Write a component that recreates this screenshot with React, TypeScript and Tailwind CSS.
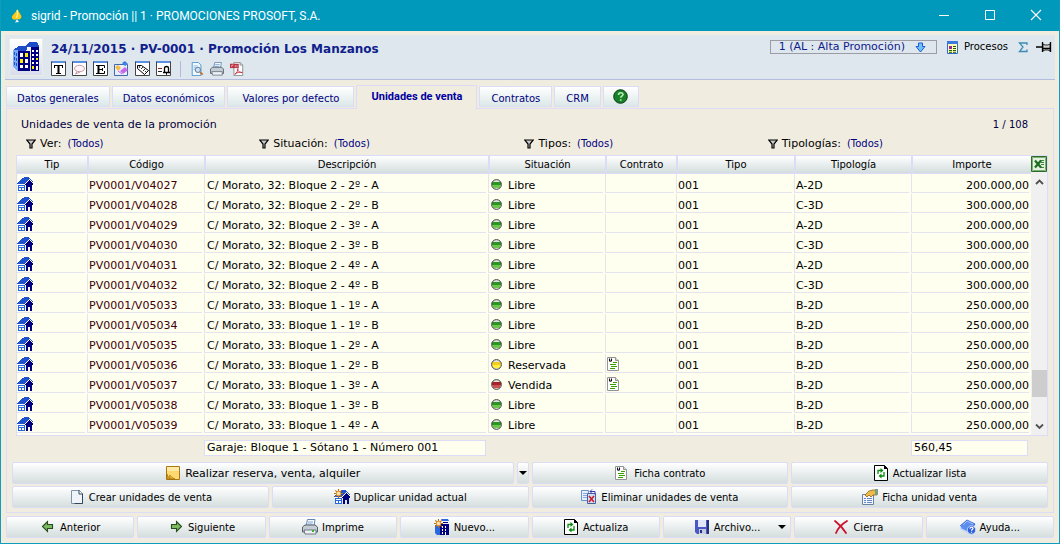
import { useState } from "react";
import type { ReactNode } from "react";

type Status = "Libre" | "Reservada" | "Vendida";

interface Unit {
  code: string;
  description: string;
  status: Status;
  type: string;
  typology: string;
  amount: string;
}

const unit = (code: string, description: string, typology: string, amount: string, status: Status = "Libre"): Unit => ({
  code: `PV0001/${code}`,
  description: `C/ Morato, ${description}`,
  status,
  type: "001",
  typology,
  amount,
});

const units: Unit[] = [
  unit("V04027", "32: Bloque 2 - 2º - A", "A-2D", "200.000,00"),
  unit("V04028", "32: Bloque 2 - 2º - B", "C-3D", "300.000,00"),
  unit("V04029", "32: Bloque 2 - 3º - A", "A-2D", "200.000,00"),
  unit("V04030", "32: Bloque 2 - 3º - B", "C-3D", "300.000,00"),
  unit("V04031", "32: Bloque 2 - 4º - A", "A-2D", "200.000,00"),
  unit("V04032", "32: Bloque 2 - 4º - B", "C-3D", "300.000,00"),
  unit("V05033", "33: Bloque 1 - 1º - A", "B-2D", "250.000,00"),
  unit("V05034", "33: Bloque 1 - 1º - B", "B-2D", "250.000,00"),
  unit("V05035", "33: Bloque 1 - 2º - A", "B-2D", "250.000,00"),
  unit("V05036", "33: Bloque 1 - 2º - B", "B-2D", "250.000,00", "Reservada"),
  unit("V05037", "33: Bloque 1 - 3º - A", "B-2D", "250.000,00", "Vendida"),
  unit("V05038", "33: Bloque 1 - 3º - B", "B-2D", "250.000,00"),
  unit("V05039", "33: Bloque 1 - 4º - A", "B-2D", "250.000,00"),
];

const tabs = [
  { name: "Datos generales", padding: "px-[10px]" },
  { name: "Datos económicos", padding: "px-[10px]" },
  { name: "Valores por defecto", padding: "px-[14px]" },
  { name: "Unidades de venta", padding: "px-[14px]" },
  { name: "Contratos", padding: "px-[11px]" },
  { name: "CRM", padding: "px-[11px]" },
];

/* ---------- Icons ---------- */

function Icon({ children, size = 16, crisp = false }: { children: ReactNode; size?: number; crisp?: boolean }) {
  return (
    <svg
      width={size}
      height={size}
      viewBox="0 0 16 16"
      fill="none"
      shapeRendering={crisp ? "crispEdges" : "auto"}
      className="shrink-0"
      aria-hidden="true"
    >
      {children}
    </svg>
  );
}

function HouseShape() {
  return (
    <>
      <path d="M0 7h1V6h1V5h1V4h1V3h1V2h2V1h5v1h1v1h1v1h1v1h1v3H0z" fill="#1f52cc" />
      <path d="M1 9h7v6H1z" fill="#2868e0" />
      <path d="M2 10h5v1H2zM2 12h2v2H2zM5 12h2v2H5z" fill="#fff" />
      <path d="M0 8h8v1H0zM7 8h1V7h1V6h1V5h1V4h1V3h1v1h1v1h1v1h1v3H7z" fill="#fff" />
      <path d="M8 8h1V7h1V6h1V5h1V4h1v1h1v1h1v1h1v2h-1v6h-2v-4h-2v4H9V9H8z" fill="#000080" />
    </>
  );
}

const HouseIcon = () => <Icon crisp><HouseShape /></Icon>;

function Star() {
  return (
    <>
      <path d="M4.5 0v9M0 4.500h9M1.300 1.300l6.400 6.400M7.700 1.300L1.300 7.700" stroke="#c06a10" strokeWidth="1.100" />
      <circle cx="4.500" cy="4.500" r="2.200" fill="#ffe9b0" stroke="#e09028" />
    </>
  );
}

const DuplicateIcon = () => <Icon><HouseShape /><Star /></Icon>;

const NewIcon = () => (
  <Icon>
    <path d="M1 6h5v10H3l-2-2zM7 0h7l1 2H8z" fill="#2868e0" />
    <path d="M6 5h9v11H6zM9 3h5v1H9z" fill="#000080" />
    <path d="M8 7h1v2H8zM11 7h1v2h-1zM8 10h1v2H8zM11 10h1v2h-1zM8 13h1v2H8zM11 13h1v3h-1z" fill="#fff" />
    <Star />
  </Icon>
);

const NoteIcon = () => (
  <Icon>
    <path d="M1.500 1.500h13v13h-13z" fill="#ffd970" stroke="#a87812" />
    <path d="M2 2h12v4H2z" fill="#ffe9a4" />
    <path d="M2 9c1 3 2 4 3 5H2zM5 14c-1-2-1-3 0-4 1 2 3 3 5 4z" fill="#e9ac28" stroke="#9c6a0c" strokeWidth=".6" />
  </Icon>
);

const PageIcon = () => (
  <Icon>
    <path d="M2.500 1.500h8l3 3v10h-11z" fill="#eef4fa" stroke="#8494a8" />
    <path d="M10.500 1.500l3 3v10h-8" stroke="#34465c" />
    <path d="M10 1v4h4" fill="#fff" stroke="#34465c" />
  </Icon>
);

const ContractIcon = () => (
  <Icon>
    <path d="M1.500 1.500h8l3 3v10h-11z" fill="#fff" stroke="#949494" />
    <path d="M9.500 1.500v3h3" fill="#ddd" stroke="#949494" />
    <path d="M3.500 2.500v2c0 1 2 1 2 0v-2" stroke="#111" strokeWidth="1.100" />
    <path d="M7 6.500h4M4 8.500h6M5 10.500h6M4 12.500h5" stroke="#35a000" strokeWidth="1.200" />
  </Icon>
);

const RefreshIcon = () => (
  <Icon>
    <path d="M1.500 .5h10l3 3v12h-13z" fill="#fff" stroke="#000" />
    <path d="M11 0l4 4h-4z" fill="#000" />
    <path d="M5 9V5.500h4M11 7v4H7" stroke="#0a8a10" strokeWidth="1.300" />
    <path d="M7.500 3l3 2.500-3 2.500zM8.500 8.500v5l-3-2.500z" fill="#0a8a10" />
  </Icon>
);

const DeleteDocsIcon = () => (
  <Icon>
    <path d="M.5 1.500h7v10h-7z" fill="#e6f0fc" stroke="#6d92c8" />
    <path d="M2 4.500h4M2 6.500h4M2 8.500h4" stroke="#88aadc" />
    <path d="M6.500 4.500h8v10h-8z" fill="#cfe0f6" stroke="#46609c" />
    <path d="M8 7l5 6M13 7l-5 6" stroke="#d01828" strokeWidth="1.600" />
    <path d="M9 2.500h5v3M11 .5l-2 2 2 2" stroke="#3838b0" />
  </Icon>
);

const PropertiesIcon = () => (
  <Icon>
    <path d="M.5 5.500h11v10H.5z" fill="#f2f6fc" stroke="#6c84a4" />
    <path d="M2 9.500h2M5 9.500h5M2 11.500h2M5 11.500h5M2 13.500h2M5 13.500h5" stroke="#6688c8" />
    <path d="M3 6l4-4 4-1h4v5h-4L9 8 7 6 5 8z" fill="#eebc48" stroke="#946414" strokeWidth=".8" />
    <path d="M13 0h3v6h-3z" fill="#7ba080" />
  </Icon>
);

const ArrowIcon = ({ left = false }: { left?: boolean }) => (
  <Icon>
    <path
      d={left ? "M2.500 7.500l5-5v3h5v4h-5v3z" : "M13.500 7.500l-5-5v3h-5v4h5v3z"}
      fill="#7cb860"
      stroke="#274c20"
      strokeWidth="1.100"
    />
  </Icon>
);

const PrinterIcon = ({ size = 16 }: { size?: number }) => (
  <Icon size={size}>
    <path d="M4 7l1.500-6.500H13L12 7z" fill="#f6faff" stroke="#6888b0" />
    <path d="M6 3h5M5.500 5h5" stroke="#7ca4d8" />
    <path d="M.5 8l2.500-2h10l2.500 2v5h-15z" fill="#c4ccd4" stroke="#56606c" />
    <path d="M2 11h12v4H3z" fill="#eef2f6" stroke="#56606c" strokeWidth=".8" />
    {size === 16 && <path d="M10 11h2v2h-2z" fill="#38b828" />}
  </Icon>
);

const SaveIcon = () => (
  <Icon>
    <path d="M1 1h14v14H3l-2-2z" fill="#4b58c4" />
    <path d="M13 1h2v14h-2z" fill="#28307c" />
    <path d="M4 1h8v7H4z" fill="#dfe6f8" />
    <path d="M5 10h7v5H5z" fill="#c4cae0" />
    <path d="M6 11h2v3H6z" fill="#28307c" />
  </Icon>
);

const CloseIcon = () => (
  <Icon>
    <path d="M2 2c4 3 8 7 11 12M14 2C9 5 5 9 3 14" stroke="#cc1030" strokeWidth="1.800" strokeLinecap="round" />
  </Icon>
);

const HelpBookIcon = () => (
  <Icon>
    <path d="M0 7l7-6 8 4-6 9-8-4z" fill="#5c8cf0" stroke="#3058c8" strokeWidth=".8" />
    <path d="M0 7l1 3 8 4" stroke="#c8dcff" strokeWidth="1.500" />
    <path d="M3 6l4-4 6 3" stroke="#a4c4ff" />
    <circle cx="11.500" cy="11" r="4.200" fill="#3060d8" stroke="#d8e4ff" strokeWidth=".8" />
    <path d="M10 9.800c0-2 3-2 3-.2 0 1-1.500 1-1.500 2.200M11.500 12.800v1" stroke="#fff" strokeWidth="1.200" />
  </Icon>
);

const FilterIcon = () => (
  <svg width="10" height="10" viewBox="0 0 10 10" className="shrink-0" aria-hidden="true">
    <path d="M.7 1h8.600L6 5v4H4V5z" fill="#c8c8c8" stroke="#000" strokeWidth="1.200" />
  </svg>
);

const BuildingsIcon = () => (
  <svg width="26" height="30" viewBox="0 0 26 30" shapeRendering="crispEdges" aria-hidden="true">
    <path d="M0 8l6-4h9l-2 5H5v-1zM13 4l3-4h8l2 4v1H15z" fill="#1c4cc8" />
    <path d="M0 8h5v21L0 25z" fill="#78acf8" />
    <path d="M1 10h1v3H1zM3 11h1v3H3zM1 15h1v3H1zM3 16h1v3H3zM1 20h1v3H1zM3 21h1v3H3z" fill="#1c4cc8" />
    <path d="M5 9h12v20H5zM18 5h8v24h-8z" fill="#000080" />
    <path d="M7 11h3v4H7zM12 11h3v4h-3zM12 17h3v4h-3zM7 23h3v3H7zM12 23h3v3h-3zM19 8h2v2h-2zM23 8h2v2h-2zM19 12h2v2h-2zM23 12h2v2h-2zM19 16h2v2h-2zM23 20h2v2h-2zM19 20h2v2h-2zM23 24h2v4h-2z" fill="#fff" />
    <path d="M7 17h3v4H7zM12 11h3v4h-3zM23 16h2v2h-2zM19 24h2v3h-2z" fill="#fff200" />
  </svg>
);

function FramedIcon({ children }: { children: ReactNode }) {
  return (
    <svg width="15" height="15" viewBox="0 0 15 15" fill="none" aria-hidden="true">
      <path d="M.5.5h14v14H.5z" fill="#fff" stroke="#444" />
      <path d="M1 0h13v2H1z" fill="#5c90e0" />
      {children}
    </svg>
  );
}

const headerTools: { label: string; icon: ReactNode }[] = [
  { label: "Texto", icon: <FramedIcon><path d="M3 4.500h9M3.500 4v3M11.500 4v3M5 12.500h5" stroke="#000" /><path d="M7.500 4v9" stroke="#000" strokeWidth="2" /></FramedIcon> },
  { label: "Comentarios", icon: <FramedIcon><ellipse cx="7.500" cy="7.500" rx="5" ry="3.200" fill="#fff4f6" stroke="#c896a4" /><path d="M5 10.500L3.500 13 8 11" stroke="#c896a4" /></FramedIcon> },
  { label: "Estado", icon: <FramedIcon><path d="M3 4.500h8.500V7M3 12.500h8.500V10M6 8.500h4M9.500 7v3" stroke="#000" /><path d="M5.500 4v9" stroke="#000" strokeWidth="2" /></FramedIcon> },
  {
    label: "Etiquetas",
    icon: (
      <svg width="15" height="15" viewBox="0 0 15 15" fill="none" aria-hidden="true">
        <path d="M.5 3.500h13v11H.5z" fill="#e8f0fc" stroke="#4468b0" />
        <path d="M8 2l3-2 3 3-3 2z" fill="#3c80e0" />
        <path d="M1 6l3-2 3 3-3 3z" fill="#f8bc40" />
        <path d="M6 10l5-4 3 3-5 4z" fill="#c868e8" />
        <path d="M4 10l4 3" stroke="#c868e8" />
      </svg>
    ),
  },
  { label: "Precio", icon: <FramedIcon><path d="M2.500 4.500h4l7 5-4 4-7-6z" fill="#fff" stroke="#000" /><path d="M6 8l2-2M8 10l2-2M10 11l1-1" stroke="#000" strokeWidth=".8" /><circle cx="4.500" cy="6" r=".8" fill="#000" /></FramedIcon> },
  { label: "Avisos", icon: <FramedIcon><path d="M2 7.500h4" stroke="#a02020" /><path d="M2 10.500h4" stroke="#222" /><path d="M7 11.500h7M8.500 11V7c0-2 4-2 4 0v4M10 13h1" stroke="#000" strokeWidth="1.300" /></FramedIcon> },
];

const PreviewIcon = () => (
  <Icon size={14}>
    <path d="M2.500.5h7l3 3v12h-10z" fill="#f0f8ff" stroke="#4890cc" />
    <path d="M4 4.500h5M4 6.500h3M4 8.500h2" stroke="#88bce4" />
    <circle cx="9" cy="9" r="3" fill="#cce0f4" stroke="#54708c" />
    <path d="M11.500 11.500l3 3" stroke="#b87830" strokeWidth="2.200" />
  </Icon>
);

const PdfIcon = () => (
  <Icon size={14}>
    <path d="M4.500.5h7l3 3v12h-10z" fill="#fff" stroke="#888" />
    <path d="M11.500.5v3h3" stroke="#888" />
    <path d="M0 2h10v5H0z" fill="#b83040" />
    <path d="M2 6V3.500h2M6 3.500v2.500M8 3.500v2.500" stroke="#f4d0d0" strokeWidth=".8" />
    <path d="M5.500 14c2-1 4-5 3.500-6.500-1 2 2 5 5 4.500-3-1-6 0-8.500 2z" stroke="#c42838" />
  </Icon>
);

const statusColors: Record<Status, [string, string]> = {
  Libre: ["#2c9424", "#6cc848"],
  Reservada: ["#f4cc20", "#fff040"],
  Vendida: ["#a82028", "#d05050"],
};

function StatusDot({ status }: { status: Status }) {
  const [dark, light] = statusColors[status];
  return (
    <svg width="12" height="12" viewBox="0 0 12 12" className="shrink-0" aria-hidden="true">
      <circle cx="5.500" cy="6.500" r="5" fill="#dce4dc" />
      <path d="M1 4h9v3H1z" fill={dark} />
      <path d="M1 7h9l-1.500 3h-6z" fill={light} />
      <circle cx="5.500" cy="6.500" r="4.900" fill="none" stroke="#484848" />
    </svg>
  );
}

const Triangle = () => (
  <svg width="8" height="4" viewBox="0 0 8 4" className="shrink-0" aria-hidden="true">
    <path d="M0 0h8L4 4z" fill="#000" />
  </svg>
);

/* ---------- Controls ---------- */

function ActionButton({ icon, label, large = false, menu = false }: { icon: ReactNode; label: string; large?: boolean; menu?: boolean }) {
  return (
    <button
      type="button"
      className={`relative flex h-[22px] min-w-0 flex-1 items-center justify-center gap-1 rounded-xs border border-[#dcdcf6] bg-linear-to-b from-white to-[#d5dede] whitespace-nowrap ${large ? "text-[11px]" : "text-[10px]"}`}
    >
      {icon}
      <span className="pt-0.5">{label}</span>
      {menu && <span className="absolute right-1"><Triangle /></span>}
    </button>
  );
}

function Filter({ label }: { label: string }) {
  return (
    <div className="flex items-center gap-1">
      <FilterIcon />
      <span>{label}:</span>
      <button type="button" className="ml-0.5 text-[10px] text-[#000080]">(Todos)</button>
    </div>
  );
}

function Th({ children }: { children: ReactNode }) {
  return (
    <th className="h-[18px] border-b border-l-2 border-[#dcdcf8] bg-linear-to-b from-white to-[#d3dddd] p-0 text-center text-[10px] leading-4 font-normal first:border-l-0">
      {children}
    </th>
  );
}

function Td({ icon, text, className = "pl-0.5" }: { icon?: ReactNode; text?: string; className?: string }) {
  return (
    <td className="group p-0">
      <div className={`mr-0.5 mb-px flex h-[19px] items-center gap-[5px] overflow-hidden border-b border-l border-[#e4e4ee] pt-0.5 whitespace-nowrap group-first:border-l-0 ${className}`}>
        {icon}
        {text && <span className="pt-1">{text}</span>}
      </div>
    </td>
  );
}

function UnitsTable() {
  return (
    <table className="w-full table-fixed border-separate border-spacing-0 text-[11px]">
      <colgroup>
        <col className="w-[70px]" />
        <col className="w-[117px]" />
        <col />
        <col className="w-[117px]" />
        <col className="w-[71px]" />
        <col className="w-[118px]" />
        <col className="w-[117px]" />
        <col className="w-[120px]" />
      </colgroup>
      <thead>
        <tr>
          <Th>Tip</Th>
          <Th>Código</Th>
          <Th>Descripción</Th>
          <Th>Situación</Th>
          <Th>Contrato</Th>
          <Th>Tipo</Th>
          <Th>Tipología</Th>
          <Th>Importe</Th>
        </tr>
      </thead>
      <tbody>
        {units.map((u) => (
          <tr key={u.code}>
            <Td className="pl-0" icon={<HouseIcon />} />
            <Td className="pl-px text-[#400008]" text={u.code} />
            <Td text={u.description} />
            <Td icon={<StatusDot status={u.status} />} text={u.status} />
            <Td className="pl-0" icon={u.status !== "Libre" && <ContractIcon />} />
            <Td className="pl-px" text={u.type} />
            <Td className="pl-px" text={u.typology} />
            <Td className="justify-end" text={u.amount} />
          </tr>
        ))}
      </tbody>
    </table>
  );
}

/* ---------- Window ---------- */

function TitleBar() {
  return (
    <header className="flex h-[31px] items-center bg-[#0099bc] pr-[15px] pl-2 text-white">
      <svg width="16" height="16" viewBox="0 0 16 16" aria-hidden="true">
        <path d="M9 1c0 4 5 6 3 9-1 2-3 1-4 1-2 1-4 1-5-1C2 7 7 5 9 1z" fill="#ffc814" />
        <path d="M8 2c1 4 1 6-1 8" stroke="#fff08c" strokeWidth="1.500" fill="none" />
        <path d="M8 11l2 3-4 .5z" fill="#f0f0f0" />
      </svg>
      <h1 className="ml-1.5 flex-1 font-[Roboto,sans-serif] text-[12px]">
        sigrid - Promoción || 1 · PROMOCIONES PROSOFT, S.A.
      </h1>
      <div className="flex gap-[30px]">
        <button type="button" aria-label="Minimizar">
          <Icon><path d="M3 7.500h10" stroke="#fff" /></Icon>
        </button>
        <button type="button" aria-label="Maximizar">
          <Icon><path d="M3.500 2.500h9v9h-9z" stroke="#fff" /></Icon>
        </button>
        <button type="button" aria-label="Cerrar">
          <Icon><path d="M3 2l10 10M13 2L3 12" stroke="#fff" strokeWidth="1.100" /></Icon>
        </button>
      </div>
    </header>
  );
}

function RecordHeader() {
  return (
    <section className="mx-1 mt-1 flex h-[45px] border-b border-[#b4bce0] bg-[#dde7ed]">
      <div className="mt-[3px] ml-1 flex h-[38px] w-[34px] items-center justify-center border border-[#eceae4] bg-linear-to-b from-white to-[#d8dcec]">
        <BuildingsIcon />
      </div>
      <div className="ml-2 flex-1">
        <h2 className="mt-1.5 text-[12px] leading-4 font-bold text-[#10208c]">
          24/11/2015 · PV-0001 · Promoción Los Manzanos
        </h2>
        <div className="mt-1 flex h-[15px] items-center gap-1.5">
          {headerTools.map((tool) => (
            <button key={tool.label} type="button" aria-label={tool.label}>{tool.icon}</button>
          ))}
          <span className="mx-[3px] h-4 w-px bg-[#b4b8e0]" />
          <button type="button" aria-label="Vista previa"><PreviewIcon /></button>
          <button type="button" aria-label="Imprimir"><PrinterIcon size={14} /></button>
          <button type="button" aria-label="Exportar a PDF"><PdfIcon /></button>
        </div>
      </div>
      <div className="mt-1 mr-[3px] flex h-4 items-center">
        <button type="button" className="flex h-3.5 items-center gap-2.5 border border-[#9c9ca4] pr-2.5 pl-2 text-[11px] leading-3 text-[#10208c]">
          1 (AL : Alta Promoción)
          <svg width="11" height="11" viewBox="0 0 11 11" aria-hidden="true">
            <path d="M3.500 1h4v3.500H10L5.500 10 1 4.500h2.500z" fill="#6cc4f8" stroke="#2458d0" />
          </svg>
        </button>
        <button type="button" className="ml-2.5 flex items-center gap-1.5 text-[10px]">
          <svg width="11" height="13" viewBox="0 0 11 13" aria-hidden="true">
            <path d="M.5.5h10v12H.5z" fill="#ffffb0" stroke="#3468d0" />
            <path d="M0 0h11v3H0z" fill="#3c78e0" />
            <path d="M2 5h3v3H2z" fill="#a020a0" />
            <path d="M6 5.500h3M6 7.500h3M2 9.500h3M6 9.500h3M2 11.300h3M6 11.300h3" stroke="#205c10" />
          </svg>
          Procesos
        </button>
        <button type="button" aria-label="Totales" className="ml-2.5">
          <svg width="10" height="11" viewBox="0 0 10 11" fill="none" aria-hidden="true">
            <path d="M9 3V1H1.500L5 5 1.500 9.500H9v-2" stroke="#3c8cb4" strokeWidth="1.300" />
          </svg>
        </button>
        <button type="button" aria-label="Fijar" className="ml-2">
          <svg width="16" height="12" viewBox="0 0 16 12" fill="none" aria-hidden="true">
            <path d="M0 6h6" stroke="#000" strokeWidth="1.500" />
            <path d="M6.500 1v10M14.500 1v10" stroke="#000" strokeWidth="1.300" />
            <path d="M7 3l2 1h3l2-1v7l-2-1H9l-2 1z" fill="#d0d0d0" stroke="#000" strokeWidth=".8" />
            <path d="M7 7.500h7" stroke="#000" strokeWidth="1.500" />
          </svg>
        </button>
      </div>
    </section>
  );
}

function TabBar({ active, onSelect }: { active: string; onSelect: (tab: string) => void }) {
  return (
    <nav className="mx-[5px] mt-[5px] flex h-[23px] items-end">
      {tabs.map((tab) =>
        tab.name === active ? (
          <button
            key={tab.name}
            type="button"
            aria-current="page"
            className={`relative z-10 mr-0.5 -mb-px flex h-6 items-center border border-b-0 border-[#dcdcf6] bg-[#f0ede0] pb-px font-[Roboto,sans-serif] text-[11px] font-bold text-[#0000a0] ${tab.padding}`}
          >
            {tab.name}
          </button>
        ) : (
          <button
            key={tab.name}
            type="button"
            onClick={() => onSelect(tab.name)}
            className={`mr-0.5 mb-px flex h-[21px] items-center border border-[#dcdcf6] bg-linear-to-b from-white to-[#dce8e8] pt-1 text-[10px] text-[#000080] ${tab.padding}`}
          >
            {tab.name}
          </button>
        ),
      )}
      <button
        type="button"
        aria-label="Ayuda"
        className="mb-px flex h-[21px] w-9 items-center justify-center border border-[#dcdcf6] bg-linear-to-b from-white to-[#dce8e8]"
      >
        <svg width="15" height="15" viewBox="0 0 15 15" fill="none" aria-hidden="true">
          <circle cx="7.500" cy="7.500" r="6.800" fill="#188028" stroke="#0c3c14" />
          <path d="M5.500 6c0-3 4.500-3 4.500-.4 0 1.500-2.300 1.600-2.300 3.200M7.700 10.200v1.600" stroke="#b8f0b8" strokeWidth="1.600" />
        </svg>
      </button>
    </nav>
  );
}

export default function App() {
  const [activeTab, setActiveTab] = useState("Unidades de venta");

  return (
    <div className="flex min-h-screen flex-col border border-t-0 border-[#109cbc] bg-[#f0ede0] font-['DejaVu_Sans',Verdana,sans-serif] text-[11px] leading-4 text-black">
      <TitleBar />
      <RecordHeader />
      <TabBar active={activeTab} onSelect={setActiveTab} />

      <main className="mx-[5px] border border-[#dcdcf6] px-[5px] pb-1">
        <div className="mt-2 mr-5 ml-[9px] flex items-center justify-between text-[#000040]">
          <h3>Unidades de venta de la promoción</h3>
          <span className="text-[10px]">1 / 108</span>
        </div>
        <div className="mt-[3px] ml-3.5 grid grid-cols-[233fr_265fr_243fr_280fr]">
          <Filter label="Ver" />
          <Filter label="Situación" />
          <Filter label="Tipos" />
          <Filter label="Tipologías" />
        </div>

        <div className="mt-[3px] ml-1 flex border border-[#dcdcf6] bg-[#fffff0]">
          <div className="min-w-0 flex-1 pb-px">
            <UnitsTable />
          </div>
          <div className="flex w-4 flex-col bg-[#f0f0f0]">
            <button type="button" aria-label="Exportar a Excel">
              <Icon>
                <path d="M.5.5h15v15H.5z" fill="#e4f0e0" stroke="#2c6c28" />
                <path d="M1.500 1.500h13v13h-13z" stroke="#7cb070" />
                <path d="M9 4.500h4M10 6.500h3M10 8.500h3M9 11.500h4" stroke="#3c8440" />
                <path d="M4 4.500l6 7M10 4.500l-6 7" stroke="#1c6c20" strokeWidth="2.200" />
              </Icon>
            </button>
            <div className="mt-0.5 flex flex-1 flex-col items-center py-1">
              <svg width="9" height="9" viewBox="0 0 9 9" fill="none" aria-hidden="true">
                <path d="M1 6l3.500-3.500L8 6" stroke="#505050" strokeWidth="1.800" />
              </svg>
              <div className="flex-[181]" />
              <div className="h-[27px] w-[15px] bg-[#cdcdcd]" />
              <div className="flex-[25]" />
              <svg width="9" height="9" viewBox="0 0 9 9" fill="none" aria-hidden="true">
                <path d="M1 2.500L4.500 6 8 2.500" stroke="#505050" strokeWidth="1.800" />
              </svg>
            </div>
          </div>
        </div>

        <div className="mt-1 ml-1 grid grid-cols-[188px_1fr_425px_117px_20px]">
          <input
            aria-label="Descripción"
            readOnly
            value="Garaje: Bloque 1 - Sótano 1 - Número 001"
            className="col-start-2 h-4 min-w-0 border border-[#dcdcf6] bg-[#fffff0] px-0.5"
          />
          <input
            aria-label="Importe"
            readOnly
            value="560,45"
            className="col-start-4 h-4 min-w-0 border border-[#dcdcf6] bg-[#fffff0] px-0.5"
          />
        </div>

        <div className="mt-1.5 grid grid-cols-4 gap-x-[3px] gap-y-0.5">
          <div className="col-span-2 flex gap-[3px]">
            <ActionButton icon={<NoteIcon />} label="Realizar reserva, venta, alquiler" large />
            <button
              type="button"
              aria-label="Más opciones"
              className="flex h-[22px] w-3 items-center justify-center rounded-xs border border-[#dcdcf6] bg-linear-to-b from-white to-[#d5dede]"
            >
              <Triangle />
            </button>
          </div>
          <ActionButton icon={<ContractIcon />} label="Ficha contrato" />
          <ActionButton icon={<RefreshIcon />} label="Actualizar lista" />
          <ActionButton icon={<PageIcon />} label="Crear unidades de venta" />
          <ActionButton icon={<DuplicateIcon />} label="Duplicar unidad actual" />
          <ActionButton icon={<DeleteDocsIcon />} label="Eliminar unidades de venta" />
          <ActionButton icon={<PropertiesIcon />} label="Ficha unidad venta" />
        </div>
      </main>

      <footer className="mx-[5px] mt-[3px] mb-1 grid grid-cols-8 gap-[3px]">
        <ActionButton icon={<ArrowIcon left />} label="Anterior" />
        <ActionButton icon={<ArrowIcon />} label="Siguiente" />
        <ActionButton icon={<PrinterIcon />} label="Imprime" />
        <ActionButton icon={<NewIcon />} label="Nuevo..." />
        <ActionButton icon={<RefreshIcon />} label="Actualiza" />
        <ActionButton icon={<SaveIcon />} label="Archivo..." menu />
        <ActionButton icon={<CloseIcon />} label="Cierra" />
        <ActionButton icon={<HelpBookIcon />} label="Ayuda..." />
      </footer>
    </div>
  );
}
